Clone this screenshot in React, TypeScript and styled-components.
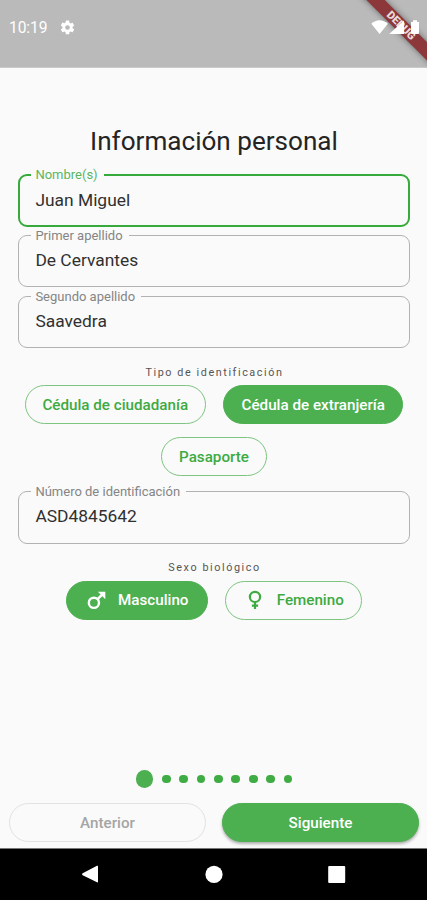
import React from 'react';
import styled, { createGlobalStyle, css } from 'styled-components';

const green = '#4caf50';
const strokeGreen = '#36ab3b';

const GlobalStyle = createGlobalStyle`
  *, *::before, *::after { box-sizing: border-box; }
  html, body { margin: 0; padding: 0; }
  body { font-family: Roboto, sans-serif; background: #fafafa; }
`;

const Screen = styled.div`
  width: 427px;
  height: 900px;
  display: flex;
  flex-direction: column;
  background: #fafafa;
  overflow: hidden;
  position: relative;
`;

const StatusBar = styled.header`
  flex: none;
  height: 68px;
  padding: 17px 8px 0 9px;
  display: flex;
  align-items: flex-start;
  justify-content: space-between;
  background: #bababa;
  border-bottom: 1px solid #c9c9c9;
  color: #fff;
`;

const StatusGroup = styled.div`
  display: flex;
  align-items: center;
  height: 20px;
  gap: 11.5px;
`;

const SystemIcons = styled.svg`
  position: relative;
  z-index: 2;
  width: 48px;
  height: 21px;
  display: block;
`;

const Clock = styled.span`
  font-size: 15.6px;
  letter-spacing: -0.1px;
  line-height: 21px;
  padding-top: 3px;
`;

const DebugBanner = styled.div`
  position: absolute;
  z-index: 1;
  top: 19px;
  left: 341px;
  width: 120px;
  height: 13.4px;
  transform: rotate(45deg);
  background: #8c383a;
  box-shadow: 0 0 6px rgba(0, 0, 0, 0.45);
  color: #eadada;
  font-size: 11.1px;
  font-weight: 900;
  line-height: 13.4px;
  text-align: center;
`;

const Form = styled.main`
  flex: 1;
  display: flex;
  flex-direction: column;
  padding: 56px 17px 0 18px;
`;

const Title = styled.h1`
  margin: 0 0 9.4px;
  font-size: 26.1px;
  font-weight: 400;
  line-height: 34px;
  text-align: center;
  color: #242424;
`;

const Field = styled.fieldset<{ $focused?: boolean }>`
  margin: 0 0 ${p => (p.$focused ? '0.9px' : '1.3px')};
  padding: 0 0 0 ${p => (p.$focused ? '11.4px' : '12.4px')};
  min-width: 0;
  height: 59.6px;
  border: ${p => (p.$focused ? `2px solid ${strokeGreen}` : '1px solid #b2b2b2')};
  border-radius: 9px;

  legend {
    padding: 0 6px 0 4px;
    height: 16px;
    font-size: 13px;
    line-height: 16px;
    color: ${p => (p.$focused ? '#5bb55f' : '#858585')};
  }

  input {
    display: block;
    width: 100%;
    height: 34px;
    margin: 0;
    padding: 0 4px 1px;
    border: 0;
    outline: 0;
    background: transparent;
    font: 400 17.4px Roboto, sans-serif;
    color: #303030;
  }
`;

const Overline = styled.div`
  margin-top: 15.2px;
  height: 14px;
  line-height: 15px;
  font-size: 10.8px;
  letter-spacing: 1.58px;
  text-align: center;
  padding-left: 1px;
  color: #555;
`;

const ChipRow = styled.div<{ $top: number; $bottom?: number }>`
  display: flex;
  justify-content: center;
  gap: 17.5px;
  margin: ${p => p.$top}px 0 ${p => p.$bottom ?? 0}px;
`;

const Pill = styled.button<{ $filled?: boolean; $width: number; $muted?: boolean; $raised?: boolean }>`
  flex: none;
  display: flex;
  align-items: center;
  justify-content: center;
  width: ${p => p.$width}px;
  height: 39px;
  padding: 0;
  border: 1px solid #7dc580;
  border-radius: 20px;
  background: transparent;
  font: 500 15.2px Roboto, sans-serif;
  white-space: nowrap;
  color: #3daa42;
  ${p => p.$filled && css`
    background: ${green};
    border-color: ${green};
    color: #fff;
  `}
  ${p => p.$muted && css`
    border-color: #e2e2e2;
    color: #a5a5a5;
  `}
  ${p => p.$raised && css`
    box-shadow: 0 2px 3px rgba(0, 0, 0, 0.3);
  `}
  svg { flex: none; margin: 0 11.5px 0 1.5px; }
`;

const Footer = styled.footer`
  flex: none;
  display: flex;
  flex-direction: column;
`;

const Dots = styled.div`
  display: flex;
  justify-content: center;
  align-items: center;
  gap: 8.7px;
  height: 18px;
  margin-bottom: 15px;
  padding-left: 1px;
`;

const Dot = styled.span<{ $active?: boolean }>`
  width: ${p => (p.$active ? 17.6 : 8.7)}px;
  height: ${p => (p.$active ? 17.6 : 8.7)}px;
  border-radius: 50%;
  background: ${p => (p.$active ? green : '#3fac44')};
`;

const Actions = styled.div`
  display: flex;
  justify-content: space-between;
  padding: 0 8px 0 9px;
  margin-bottom: 6px;
`;

const NavBar = styled.nav`
  height: 52px;
  border-top: 1px solid #777;
  background: #000;
  display: flex;
  justify-content: space-between;
  padding: 16px 81px 0;

  svg { display: block; width: 18px; height: 19px; fill: #fff; }
`;

const GearIcon = () => (
  <svg width="17" height="17" viewBox="0 0 24 24" fill="#fff">
    <path d="M19.14 12.94c.04-.3.06-.61.06-.94s-.02-.64-.07-.94l2.03-1.58a.49.49 0 0 0 .12-.61l-1.92-3.32a.49.49 0 0 0-.59-.22l-2.39.96a7 7 0 0 0-1.62-.94l-.36-2.54A.48.48 0 0 0 13.92 2h-3.84a.47.47 0 0 0-.47.41l-.36 2.54c-.59.24-1.13.57-1.62.94l-2.39-.96a.48.48 0 0 0-.59.22L2.74 8.87a.48.48 0 0 0 .12.61l2.03 1.58a7.5 7.5 0 0 0 0 1.88l-2.03 1.58a.49.49 0 0 0-.12.61l1.92 3.32c.12.22.37.29.59.22l2.39-.96c.5.38 1.03.7 1.62.94l.36 2.54c.05.24.24.41.48.41h3.84c.24 0 .44-.17.47-.41l.36-2.54a7 7 0 0 0 1.62-.94l2.39.96c.22.08.47 0 .59-.22l1.92-3.32a.47.47 0 0 0-.12-.61zM12 15.3a3.3 3.3 0 1 1 0-6.6 3.3 3.3 0 0 1 0 6.6z" />
  </svg>
);

const MaleIcon = () => (
  <svg width="20" height="20" viewBox="0 0 20 20" fill="none" stroke="#fff" strokeWidth="2.4">
    <circle cx="6.9" cy="12.8" r="5.1" />
    <path d="M10.6 9.1l5-5" />
    <path d="M10.8 1.8h7.5v7.5z" fill="#fff" stroke="none" />
  </svg>
);

const FemaleIcon = () => (
  <svg width="20" height="20" viewBox="0 0 20 20" fill="none" stroke="#3daa42" strokeWidth="2.2">
    <circle cx="10" cy="6.9" r="5.1" />
    <path d="M10 12v7M6.9 15.7h6.2" />
  </svg>
);

const TextField = ({ label, value, focused }: { label: string; value: string; focused?: boolean }) => (
  <Field $focused={focused}>
    <legend>{label}</legend>
    <input defaultValue={value} aria-label={label} />
  </Field>
);

export default function App() {
  return (
    <>
      <GlobalStyle />
      <Screen>
        <StatusBar>
          <StatusGroup>
            <Clock>10:19</Clock>
            <GearIcon />
          </StatusGroup>
          <SystemIcons viewBox="0 0 48 21" fill="#fff">
            <path d="M0.3 6.8C5 2 12.2 2 16.9 6.8L8.6 17z" />
            <path d="M18.2 17L33 3.5V17z" />
            <path d="M40 5h2V3.2h4V5h2v11q0 1-1 1h-6q-1 0-1-1z" />
          </SystemIcons>
        </StatusBar>
        <DebugBanner>DEBUG</DebugBanner>
        <Form>
          <Title>Información personal</Title>
          <TextField label="Nombre(s)" value="Juan Miguel" focused />
          <TextField label="Primer apellido" value="De Cervantes" />
          <TextField label="Segundo apellido" value="Saavedra" />
          <Overline>Tipo de identificación</Overline>
          <ChipRow $top={6.6}>
            <Pill $width={181}>Cédula de ciudadanía</Pill>
            <Pill $width={180} $filled>Cédula de extranjería</Pill>
          </ChipRow>
          <ChipRow $top={12.6} $bottom={7.9}>
            <Pill $width={106}>Pasaporte</Pill>
          </ChipRow>
          <TextField label="Número de identificación" value="ASD4845642" />
          <Overline>Sexo biológico</Overline>
          <ChipRow $top={6.6}>
            <Pill $width={142} $filled><MaleIcon />Masculino</Pill>
            <Pill $width={137}><FemaleIcon />Femenino</Pill>
          </ChipRow>
        </Form>
        <Footer>
          <Dots>
            <Dot $active />
            {Array.from({ length: 8 }, (_, i) => <Dot key={i} />)}
          </Dots>
          <Actions>
            <Pill $width={197} $muted>Anterior</Pill>
            <Pill $width={197} $filled $raised>Siguiente</Pill>
          </Actions>
          <NavBar>
            <svg viewBox="0 0 18 19"><path d="M1.2 8.5L16 .8q1-.5 1 .5v15.5q0 1-1 .5L1.2 10z" /></svg>
            <svg viewBox="0 0 18 19"><circle cx="9" cy="9.4" r="8.6" /></svg>
            <svg viewBox="0 0 18 19"><rect x=".2" y="1" width="17" height="17" rx="1" /></svg>
          </NavBar>
        </Footer>
      </Screen>
    </>
  );
}
